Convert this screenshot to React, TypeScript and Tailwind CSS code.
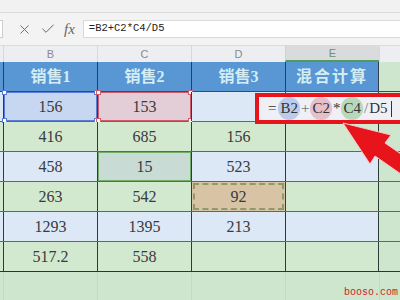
import { X, Check } from 'lucide-react'

const NUM_FONT = "font-['Liberation_Serif','Noto_Sans_CJK_SC',serif]"

type Cell = {
  v: string
  bg?: string
  sel?: 'blue' | 'red' | 'green' | 'dash'
}

const FILAS: { bg: string; cells: Cell[] }[] = [
  {
    bg: 'bg-[#dce8f6]',
    cells: [
      { v: '156', bg: 'bg-[#c7d7f1]', sel: 'blue' },
      { v: '153', bg: 'bg-[#e3cdd7]', sel: 'red' },
      { v: '' },
      { v: '' },
    ],
  },
  { bg: 'bg-[#d3e9cf]', cells: [{ v: '416' }, { v: '685' }, { v: '156' }, { v: '' }] },
  {
    bg: 'bg-[#dce8f6]',
    cells: [{ v: '458' }, { v: '15', bg: 'bg-[#c8dbd5]', sel: 'green' }, { v: '523' }, { v: '' }],
  },
  {
    bg: 'bg-[#d3e9cf]',
    cells: [{ v: '263' }, { v: '542' }, { v: '92', bg: 'bg-[#d8c4a4]', sel: 'dash' }, { v: '' }],
  },
  { bg: 'bg-[#dce8f6]', cells: [{ v: '1293' }, { v: '1395' }, { v: '213' }, { v: '' }] },
  { bg: 'bg-[#d3e9cf]', cells: [{ v: '517.2' }, { v: '558' }, { v: '' }, { v: '' }] },
]

function Handles({ color }: { color: string }) {
  const base = `absolute w-[5px] h-[5px] border ${color} bg-white`
  return (
    <>
      <span className={`${base} -left-[3px] -top-[3px]`} />
      <span className={`${base} -right-[3px] -top-[3px]`} />
      <span className={`${base} -left-[3px] -bottom-[3px]`} />
      <span className={`${base} -right-[3px] -bottom-[3px]`} />
    </>
  )
}

function Seleccion({ sel }: { sel: Cell['sel'] }) {
  if (sel === 'blue')
    return (
      <span className="absolute inset-0 border border-[#5a7cd4]">
        <Handles color="border-[#5a7cd4]" />
      </span>
    )
  if (sel === 'red')
    return (
      <span className="absolute inset-0 border border-[#cf5b6b]">
        <Handles color="border-[#cf5b6b]" />
      </span>
    )
  if (sel === 'green')
    return <span className="absolute inset-0 border border-[#71ad66]" />
  if (sel === 'dash')
    return <span className="absolute inset-[1px] border-2 border-dashed border-[#8c9a6c]" />
  return null
}

export default function App() {
  return (
    <div className="relative w-[400px] h-[300px] overflow-hidden bg-[#cfe6ce] font-['Liberation_Sans',sans-serif]">
      {/* barra superior */}
      <div className="h-[13px] bg-[#f1f1f1] border-b border-[#dadada]" />

      {/* barra de fórmulas */}
      <div className="h-[32px] bg-[#f3f3f3] flex items-center">
        <div className="w-[3px] h-[18px] bg-white border border-l-0 border-[#cfcfcf]" />
        <div className="flex items-center gap-[8px] pl-[14px] text-[#666]">
          <X size={15} strokeWidth={1.5} />
          <Check size={16} strokeWidth={1.5} />
          <span className="font-['Liberation_Serif',serif] italic text-[15px] leading-none">fx</span>
        </div>
        <div className="ml-[8px] flex-1 h-[18px] bg-white border border-r-0 border-[#d9d9d9] flex items-center pl-[5px] font-['Liberation_Mono',monospace] text-[10.5px] text-[#222]">
          =B2+C2*C4/D5
        </div>
      </div>

      {/* letras de columnas */}
      <div className="h-[17px] flex bg-[#eceef1] border-t border-[#ecd4d4] text-[11px] text-[#8a8a8a]">
        <div className="w-[3px]" />
        {['B', 'C', 'D'].map((l) => (
          <div key={l} className="w-[94px] flex items-center justify-center border-l border-[#d6d8dc]">
            {l}
          </div>
        ))}
        <div className="w-[94px] flex items-center justify-center bg-[#d9dbdd] border-l border-[#cfd1d4] border-b-2 border-b-[#4e9b5c] text-[#6f8f75]">
          E
        </div>
        <div className="flex-1 border-l border-[#d6d8dc]" />
      </div>

      {/* encabezado azul */}
      <div className="h-[30px] flex border-b border-[#3c4c5c]">
        <div className="w-[3px] bg-[#5896d4]" />
        {['销售1', '销售2', '销售3', '混合计算'].map((t, i) => (
          <div
            key={t}
            className={`w-[94px] flex items-center justify-center border-l border-[#2f3f50] bg-[#5896d4] font-['Liberation_Serif','Noto_Sans_CJK_SC',serif] font-bold text-[16px] text-[#d3edf3] ${
              i === 3 ? 'border-r tracking-[2px]' : ''
            }`}
          >
            {t}
          </div>
        ))}
        <div className="flex-1" />
      </div>

      {/* filas de datos */}
      {FILAS.map((fila, r) => (
        <div
          key={r}
          className={`h-[30px] flex ${r === FILAS.length - 1 ? 'border-b border-[#2c3530]' : 'border-b border-[#5d6963]'}`}
        >
          <div className={`w-[3px] ${fila.bg}`} />
          {fila.cells.map((c, i) => (
            <div
              key={i}
              className={`relative w-[94px] flex items-center justify-center border-l border-[#2f3b38] ${
                c.bg ?? fila.bg
              } ${i === 3 ? 'border-r' : ''} ${NUM_FONT} text-[16px] text-[#3a3a3a]`}
            >
              {c.v}
              <Seleccion sel={c.sel} />
            </div>
          ))}
          <div className="flex-1 bg-[#cfe6ce]" />
        </div>
      ))}

      {/* zona vacía inferior */}
      <div className="h-[28px] flex">
        <div className="w-[3px]" />
        {[0, 1, 2, 3].map((i) => (
          <div key={i} className="w-[94px] border-l border-[#c2dcc2]" />
        ))}
        <div className="flex-1 border-l border-[#c2dcc2]" />
      </div>

      {/* editor de fórmula en E2 */}
      <div className="absolute left-[255px] top-[93px] w-[150px] h-[31px] border-[4px] border-[#e8141b] bg-[#eef0f5]">
        <div className={`h-full flex items-center pl-[9px] gap-[1px] ${NUM_FONT} text-[15px] text-[#333]`}>
          <span className="pr-[1px]">=</span>
          <span className="px-[2px] rounded-full bg-[#bccaec]">B2</span>
          <span className="text-[#777]">+</span>
          <span className="px-[2px] rounded-full bg-[#e5c0cb]">C2</span>
          <span>*</span>
          <span className="px-[2px] rounded-full bg-[#b9d8bb]">C4</span>
          <span className="text-[#777]">/</span>
          <span>D5</span>
          <span className="ml-[2px] w-[1px] h-[16px] bg-[#333]" />
        </div>
      </div>

      {/* flecha */}
      <svg className="absolute left-0 top-0" width="400" height="300" viewBox="0 0 400 300">
        <polygon
          points="343,123 391,135 385,143 430,174 421,188 375,156 370,164"
          fill="#e8141b"
          stroke="#f6c9c9"
          strokeWidth="1"
        />
      </svg>

      {/* marca de agua */}
      <div className="absolute left-[344px] top-[288px] font-['Liberation_Mono',monospace] text-[10px] leading-none text-[#d4201f]">
        booso.com
      </div>
    </div>
  )
}
